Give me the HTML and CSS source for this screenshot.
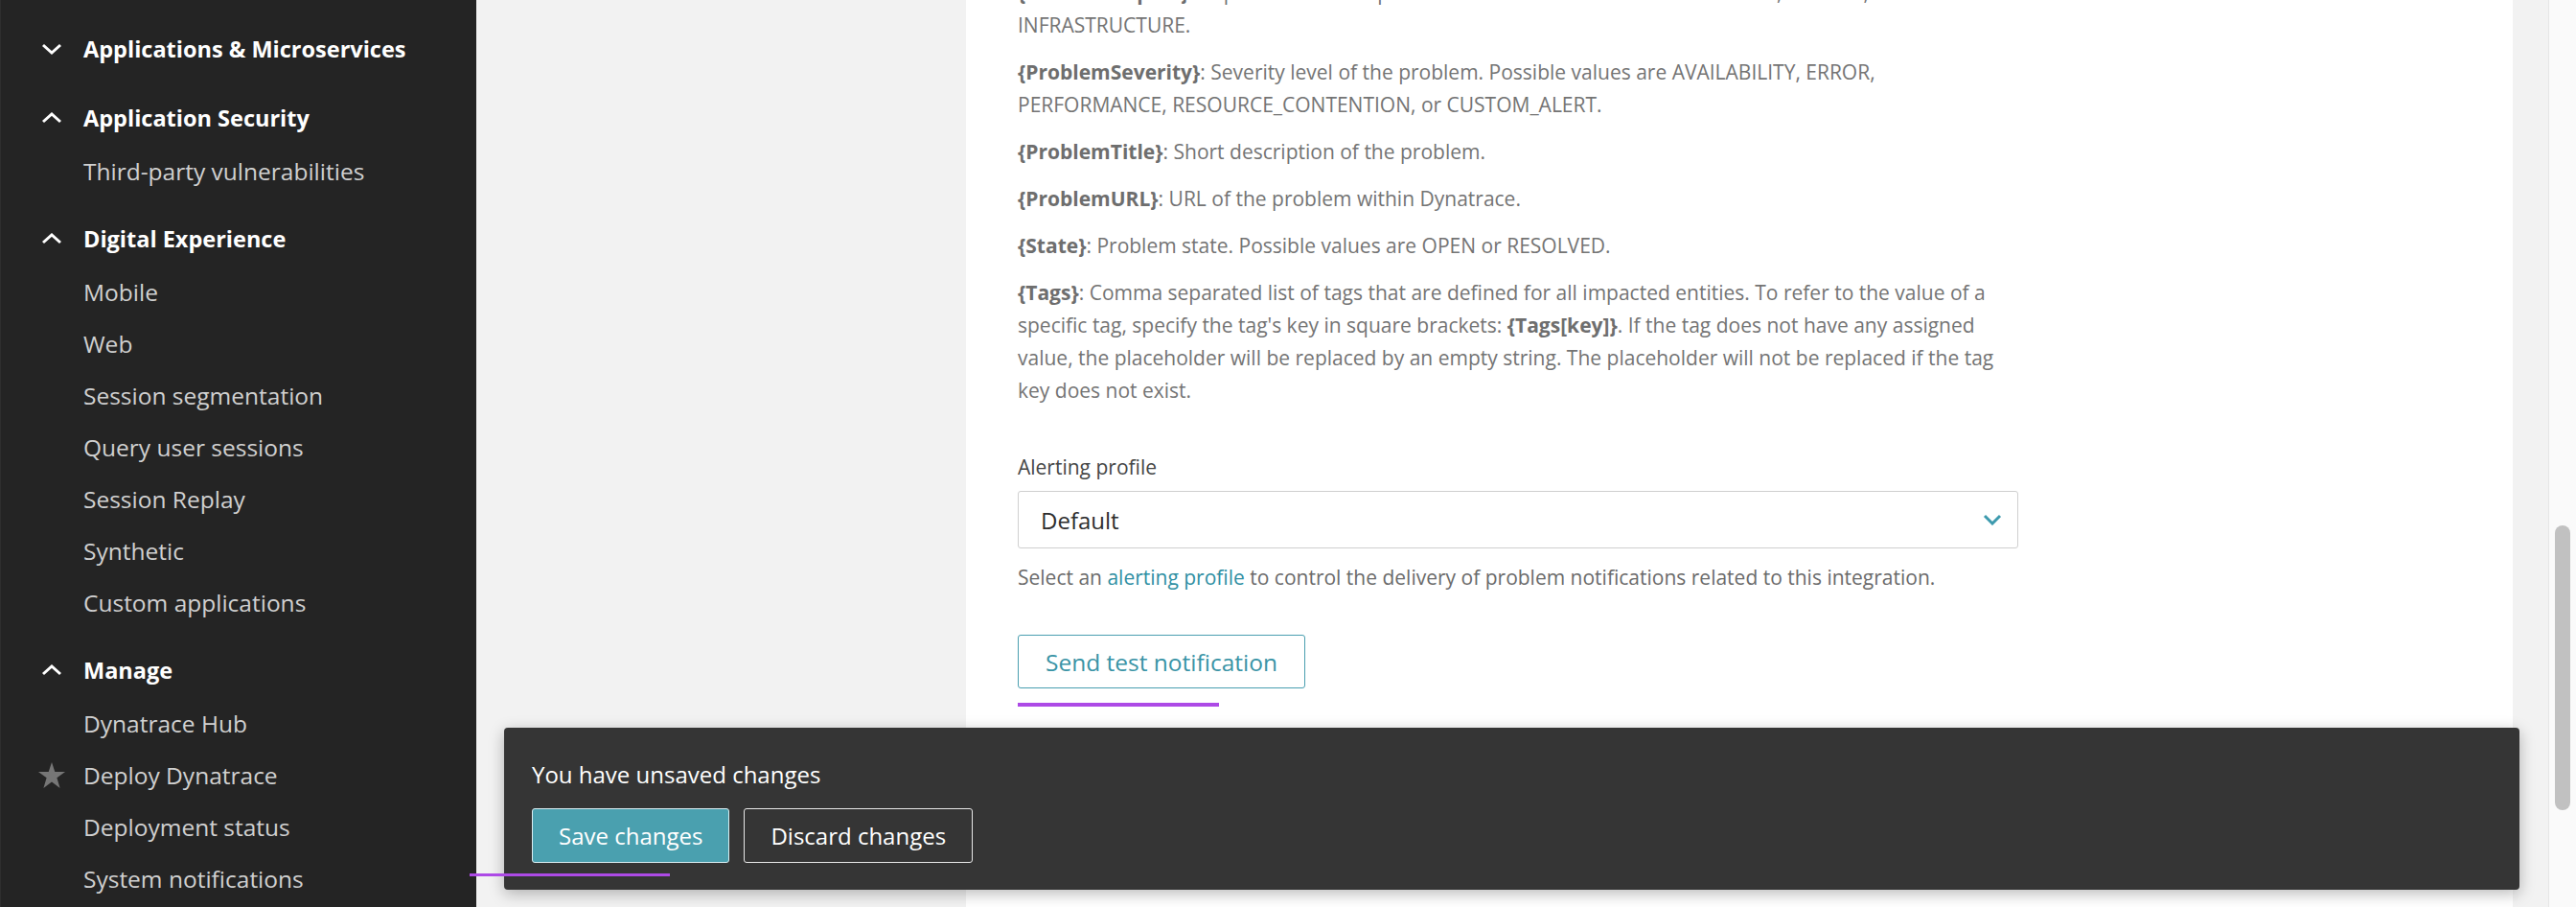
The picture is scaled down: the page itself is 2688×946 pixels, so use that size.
FILE: index.html
```html
<!DOCTYPE html>
<html lang="en">
<head>
<meta charset="utf-8">
<title>Problem notification integration</title>
<link rel="stylesheet" href="styles.css">
</head>
<body>
<div class="app">
  <nav class="sidebar">
    <div class="nav-heading">
      <span class="nav-icon"><svg width="22" height="12" viewBox="0 0 22 12"><path d="M2 2 L11 10 L20 2" fill="none" stroke="#fff" stroke-width="3"/></svg></span>
      <span>Applications &amp; Microservices</span>
    </div>
    <div class="nav-heading">
      <span class="nav-icon"><svg width="22" height="12" viewBox="0 0 22 12"><path d="M2 10 L11 2 L20 10" fill="none" stroke="#fff" stroke-width="3"/></svg></span>
      <span>Application Security</span>
    </div>
    <div class="nav-item"><span class="nav-icon"></span><span>Third-party vulnerabilities</span></div>
    <div class="nav-heading">
      <span class="nav-icon"><svg width="22" height="12" viewBox="0 0 22 12"><path d="M2 10 L11 2 L20 10" fill="none" stroke="#fff" stroke-width="3"/></svg></span>
      <span>Digital Experience</span>
    </div>
    <div class="nav-item"><span class="nav-icon"></span><span>Mobile</span></div>
    <div class="nav-item"><span class="nav-icon"></span><span>Web</span></div>
    <div class="nav-item"><span class="nav-icon"></span><span>Session segmentation</span></div>
    <div class="nav-item"><span class="nav-icon"></span><span>Query user sessions</span></div>
    <div class="nav-item"><span class="nav-icon"></span><span>Session Replay</span></div>
    <div class="nav-item"><span class="nav-icon"></span><span>Synthetic</span></div>
    <div class="nav-item"><span class="nav-icon"></span><span>Custom applications</span></div>
    <div class="nav-heading">
      <span class="nav-icon"><svg width="22" height="12" viewBox="0 0 22 12"><path d="M2 10 L11 2 L20 10" fill="none" stroke="#fff" stroke-width="3"/></svg></span>
      <span>Manage</span>
    </div>
    <div class="nav-item"><span class="nav-icon"></span><span>Dynatrace Hub</span></div>
    <div class="nav-item"><span class="nav-icon star"><svg width="28" height="27" viewBox="0 0 28 27"><path d="M14 0 L17.3 10 L28 10 L19.4 16.3 L22.6 27 L14 20.5 L5.4 27 L8.6 16.3 L0 10 L10.7 10 Z" fill="#767676"/></svg></span><span>Deploy Dynatrace</span></div>
    <div class="nav-item"><span class="nav-icon"></span><span>Deployment status</span></div>
    <div class="nav-item"><span class="nav-icon"></span><span>System notifications</span></div>
  </nav>

  <main class="main">
    <section class="card">
      <div class="placeholders">
        <p><b>{ProblemImpact}</b>: Impact level of the problem. Possible values are APPLICATION, SERVICE, or INFRASTRUCTURE.</p>
        <p><b>{ProblemSeverity}</b>: Severity level of the problem. Possible values are AVAILABILITY, ERROR, PERFORMANCE, RESOURCE_CONTENTION, or CUSTOM_ALERT.</p>
        <p><b>{ProblemTitle}</b>: Short description of the problem.</p>
        <p><b>{ProblemURL}</b>: URL of the problem within Dynatrace.</p>
        <p><b>{State}</b>: Problem state. Possible values are OPEN or RESOLVED.</p>
        <p><b>{Tags}</b>: Comma separated list of tags that are defined for all impacted entities. To refer to the value of a specific tag, specify the tag's key in square brackets: <b>{Tags[key]}</b>. If the tag does not have any assigned value, the placeholder will be replaced by an empty string. The placeholder will not be replaced if the tag key does not exist.</p>
      </div>

      <label class="field-label">Alerting profile</label>
      <div class="select">
        <span>Default</span>
        <svg width="20" height="12" viewBox="0 0 20 12"><path d="M2 2 L10 10 L18 2" fill="none" stroke="#3d9aae" stroke-width="3"/></svg>
      </div>
      <p class="helper">Select an <a class="link">alerting profile</a> to control the delivery of problem notifications related to this integration.</p>

      <div class="test-row">
        <button class="btn-outline">Send test notification</button>
      </div>
    </section>
    <div class="scrollbar"><div class="thumb"></div></div>
  </main>
</div>

<div class="toast">
  <div class="toast-text">You have unsaved changes</div>
  <div class="toast-actions">
    <button class="btn-primary">Save changes</button>
    <button class="btn-ghost">Discard changes</button>
  </div>
</div>

<div class="focus-line line-test"></div>
<div class="focus-line line-save"></div>
</body>
</html>
```

FILE: styles.css
```css
* { box-sizing: border-box; }

html, body {
  margin: 0;
  width: 2688px;
  height: 946px;
  overflow: hidden;
}

body {
  font-family: "Open Sans", "Noto Sans", sans-serif;
  background: #f2f2f2;
  position: relative;
}

.app {
  display: flex;
  height: 946px;
}

/* Sidebar */
.sidebar {
  width: 497px;
  flex: none;
  background: #242424;
  padding-top: 7px;
  border-left: 1px solid #2e2e2e;
}

.nav-heading,
.nav-item {
  display: flex;
  align-items: center;
  padding-left: 42px;
}

.nav-heading {
  height: 56px;
  margin-top: 16px;
  color: #ffffff;
  font-weight: 700;
  font-size: 23.5px;
}

.nav-item {
  height: 54px;
  color: #d0d0d0;
  font-size: 24.5px;
}

.nav-icon {
  width: 44px;
  flex: none;
  display: flex;
  align-items: center;
}

.nav-icon.star {
  margin-left: -3px;
  width: 47px;
}

/* Main */
.main {
  flex: 1;
  display: flex;
  overflow: hidden;
  padding-left: 511px;
  background: #f2f2f2;
}

.card {
  width: 1614px;
  flex: none;
  background: #ffffff;
  margin-top: -25px;
  padding-left: 54px;
  height: 1000px;
}

.placeholders {
  width: 1044px;
  font-size: 21px;
  line-height: 34px;
  color: #747474;
}

.placeholders p {
  margin: 0 0 15px;
}

.placeholders b {
  font-weight: 700;
  color: #6e6e6e;
}

.field-label {
  display: block;
  margin-top: 50px;
  font-size: 21px;
  line-height: 26px;
  color: #454646;
}

.select {
  margin-top: 12px;
  width: 1044px;
  height: 60px;
  border: 1px solid #cfcfcf;
  border-radius: 3px;
  display: flex;
  align-items: center;
  justify-content: space-between;
  padding: 0 16px 0 23px;
  font-size: 24px;
  color: #2e2e2e;
}

.helper {
  margin: 17px 0 0;
  font-size: 21px;
  line-height: 26px;
  color: #6b6b6b;
}

.link {
  color: #2f8fa3;
}

.test-row {
  margin-top: 47px;
}

.btn-outline {
  height: 56px;
  padding: 0 28px;
  background: #ffffff;
  border: 1px solid #4a9fb0;
  border-radius: 3px;
  color: #3a94a6;
  font-family: inherit;
  font-size: 24.5px;
}

.scrollbar {
  width: 29px;
  margin-left: 37px;
  flex: none;
  background: #fafafa;
  border-left: 1px solid #e6e6e6;
  padding: 548px 0 0 6px;
}

.thumb {
  width: 16px;
  height: 297px;
  border-radius: 8px;
  background: #c1c1c1;
}

/* Toast overlay */
.toast {
  position: absolute;
  left: 526px;
  top: 759px;
  width: 2103px;
  height: 169px;
  background: #353535;
  border-radius: 4px;
  box-shadow: 0 4px 16px rgba(0, 0, 0, 0.28);
  padding: 35px 0 0 29px;
}

.toast-text {
  color: #ffffff;
  font-size: 24px;
  line-height: 28px;
}

.toast-actions {
  display: flex;
  gap: 15px;
  margin-top: 21px;
}

.btn-primary,
.btn-ghost {
  height: 57px;
  padding: 0 27px;
  border-radius: 3px;
  font-family: inherit;
  font-size: 24px;
  color: #ffffff;
}

.btn-primary {
  background: #4aa0af;
  border: 1px solid #d9eef2;
}

.btn-ghost {
  background: transparent;
  border: 1px solid #e8e8e8;
}

/* focus markers */
.focus-line {
  position: absolute;
  background: #ad4ae6;
}

.line-test {
  left: 1062px;
  top: 733px;
  width: 210px;
  height: 4px;
}

.line-save {
  left: 490px;
  top: 911px;
  width: 209px;
  height: 3px;
}
```
